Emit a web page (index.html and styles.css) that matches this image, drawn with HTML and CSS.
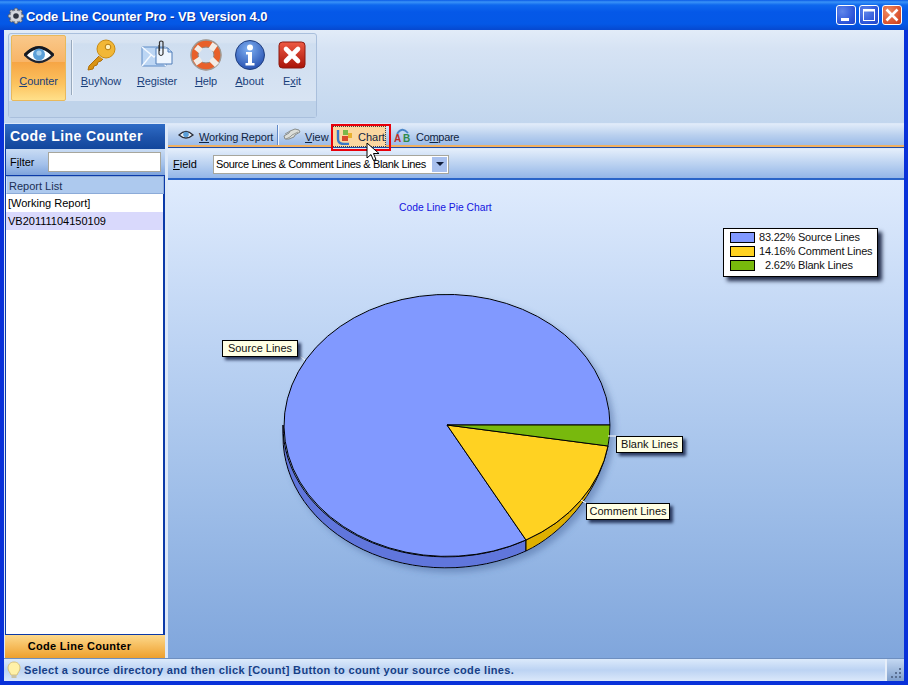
FILE: index.html
```html
<!DOCTYPE html>
<html lang="en">
<head>
<meta charset="utf-8">
<title>Code Line Counter Pro</title>
<link rel="stylesheet" href="styles.css">
</head>
<body>
<div class="window">
  <header class="titlebar">
    <svg class="app-icon" width="18" height="18" viewBox="0 0 18 18">
      <g fill="#c4c8d0" stroke="#4a4f5c" stroke-width=".7"><circle cx="9" cy="9" r="6.5"/><circle cx="9" cy="2.8" r="1.8"/><circle cx="9" cy="15.2" r="1.8"/><circle cx="2.8" cy="9" r="1.8"/><circle cx="15.2" cy="9" r="1.8"/><circle cx="4.6" cy="4.6" r="1.8"/><circle cx="13.4" cy="4.6" r="1.8"/><circle cx="4.6" cy="13.4" r="1.8"/><circle cx="13.4" cy="13.4" r="1.8"/></g>
      <circle cx="9" cy="9" r="5.6" fill="#d4d7de"/><circle cx="9" cy="9" r="2.8" fill="#2f3542"/>
    </svg>
    <span class="title-text">Code Line Counter Pro - VB Version 4.0</span>
    <div class="win-buttons">
      <span class="win-btn"><svg width="20" height="20" viewBox="0 0 20 20"><rect x="5" y="13" width="8" height="3" fill="#fff"/></svg></span>
      <span class="win-btn"><svg width="20" height="20" viewBox="0 0 20 20"><rect x="4.500" y="4.500" width="11" height="11" fill="none" stroke="#fff" stroke-width="1"/><rect x="4.500" y="4" width="11" height="2.500" fill="#fff"/></svg></span>
      <span class="win-btn close"><svg width="20" height="20" viewBox="0 0 20 20"><path d="M4.500 4.500l11 11M15.500 4.500l-11 11" stroke="#fff" stroke-width="2.600"/></svg></span>
    </div>
  </header>

  <div class="client">
    <section class="ribbon">
      <div class="ribbon-group">
        <div class="ribbon-lower"></div>
        <div class="ribbon-items">
          <div class="rb-btn active w54">
            <svg width="30" height="22" viewBox="0 0 30 22"><path d="M1 11Q15-4 29 11Q15 25 1 11Z" fill="#fff" stroke="#1f2430" stroke-width="2.400"/><path d="M1 11Q15-4 29 11" fill="none" stroke="#15181f" stroke-width="3"/><circle cx="15" cy="10.500" r="6" fill="#5b9fd8"/><circle cx="15" cy="9" r="2.600" fill="#a9d2f0"/></svg>
            <span><u>C</u>ounter</span>
          </div>
          <div class="rb-sep"></div>
          <div class="rb-btn w56">
            <svg width="32" height="32" viewBox="0 0 32 32"><path d="M14 17L4 27l-1 4 5-1 1-3 3-1 1-3 3-1 2-2" fill="#d99414" stroke="#b06f08" stroke-width="1"/><circle cx="21" cy="10" r="9" fill="#f2b736" stroke="#c98a10"/><circle cx="23" cy="8" r="2.800" fill="#fff2bf" stroke="#b67b0c"/></svg>
            <span><u>B</u>uyNow</span>
          </div>
          <div class="rb-btn w56">
            <svg width="32" height="32" viewBox="0 0 32 32"><path d="M1 8h24v19H1z" fill="#bcd6f4" stroke="#5f8cc6"/><path d="M1 8l12 10L25 8M1 27l9-11M25 27l-9-11" fill="none" stroke="#f4f9ff" stroke-width="1.400"/><path d="M15 9h12l4 4v12H15z" fill="#eef6ff" stroke="#4f7db8"/><path d="M27 9v4h4" fill="#bcd6f4" stroke="#4f7db8"/><path d="M18 6v9q2 3 4 0V3q-2-2-3.500 0v9" fill="none" stroke="#333" stroke-width="1.200"/></svg>
            <span><u>R</u>egister</span>
          </div>
          <div class="rb-btn w42">
            <svg width="32" height="32" viewBox="0 0 32 32"><circle cx="16" cy="16" r="11.500" fill="none" stroke="#e8602a" stroke-width="7.500"/><circle cx="16" cy="16" r="15" fill="none" stroke="#9d9a94" stroke-width="1.400"/><circle cx="16" cy="16" r="8" fill="none" stroke="#8e8a85" stroke-width="1"/><path d="M6 8l5 4M25 5l-4 6M5 24l6-4M27 26l-6-6" stroke="#f1ece6" stroke-width="6"/></svg>
            <span><u>H</u>elp</span>
          </div>
          <div class="rb-btn w46">
            <svg width="32" height="32" viewBox="0 0 32 32"><defs><radialGradient id="ab" cx=".45" cy=".3" r=".8"><stop offset="0" stop-color="#7fb0f2"/><stop offset="1" stop-color="#1c45a8"/></radialGradient></defs><circle cx="16" cy="16" r="14.500" fill="url(#ab)" stroke="#22407f"/><circle cx="16" cy="8.500" r="3" fill="#fff"/><path d="M12 13h6v11h2.500v2.500h-9V24H14v-8.500h-2z" fill="#fff"/></svg>
            <span><u>A</u>bout</span>
          </div>
          <div class="rb-btn w40">
            <svg width="32" height="32" viewBox="0 0 32 32"><defs><linearGradient id="ex" x1="0" y1="0" x2="0" y2="1"><stop offset="0" stop-color="#ee5a44"/><stop offset="1" stop-color="#a81408"/></linearGradient></defs><rect x="3" y="3" width="26" height="26" rx="3.500" fill="url(#ex)" stroke="#8a1a10"/><path d="M10 10l12 12M22 10L10 22" stroke="#fff" stroke-width="4.600" stroke-linecap="round"/></svg>
            <span>E<u>x</u>it</span>
          </div>
        </div>
      </div>
    </section>

    <div class="main">
      <aside class="side">
        <div class="side-head">Code Line Counter</div>
        <div class="filter"><label>F<u>i</u>lter</label><div class="input"></div></div>
        <div class="list-head">Report List</div>
        <ul class="list">
          <li>[Working Report]</li>
          <li class="selected">VB20111104150109</li>
        </ul>
        <div class="side-foot">Code Line Counter</div>
      </aside>

      <div class="content">
        <nav class="tabs">
          <div class="tab t-work">
            <svg width="16" height="12" viewBox="0 0 16 12"><path d="M1 6Q8-1 15 6Q8 12 1 6Z" fill="#eef2f6" stroke="#2a2f3a" stroke-width="1.300"/><circle cx="8" cy="5.500" r="2.800" fill="#5b9fd8"/></svg>
            <span><u>W</u>orking Report</span>
          </div>
          <div class="tab-sep"></div>
          <div class="tab t-view">
            <svg width="18" height="13" viewBox="0 0 18 13"><path d="M1 8l5-3 1-2 5-2 4 1 1 2-5 3-1 2-5 2-4 0z" fill="#dcded9" stroke="#767974" stroke-width=".8"/><path d="M3 11l4-2 2-2 6-3M2 6l5-3" stroke="#8f928e" stroke-width=".9" fill="none"/></svg>
            <span><u>V</u>iew</span>
          </div>
          <div class="tab t-chart">
            <svg width="17" height="17" viewBox="0 0 17 17"><path d="M2 2v9q0 5 6 5h5" fill="none" stroke="#3a78c8" stroke-width="2.400"/><path d="M7 2h5v5H7z" fill="#7bb84a"/><path d="M12 5h4v5h-4z" fill="#e8b030"/><path d="M6 8h6v5H6z" fill="#d9482c"/></svg>
            <span>Chart</span>
          </div>
          <div class="tab t-comp">
            <svg width="17" height="16" viewBox="0 0 17 16"><path d="M3 7Q8-1 14 6" fill="none" stroke="#4a86c8" stroke-width="1.800"/><text x="0" y="15" class="ab-a">A</text><text x="9" y="15" class="ab-b">B</text></svg>
            <span>Co<u>m</u>pare</span>
          </div>
        </nav>
        <div class="field-row">
          <label><u>F</u>ield</label>
          <div class="select"><span>Source Lines &amp; Comment Lines &amp; Blank Lines</span><i class="arrow"></i></div>
        </div>
        <div class="chart">
          <div class="chart-title">Code Line Pie Chart</div>
          <svg class="pie" width="736" height="478" viewBox="168 180 736 478">
            <defs><filter id="sh" x="-10%" y="-10%" width="125%" height="125%"><feDropShadow dx="4" dy="4" stdDeviation="3" flood-color="#3f5f95" flood-opacity=".45"/></filter></defs>
            <g stroke="#000" stroke-width="1" filter="url(#sh)">
              <path d="M283 425V436A163 131 0 0 0 526 551V540A163 131 0 0 1 283 425Z" fill="#6176dc"/>
              <path d="M526 540V551C560 535 598 495 608 446A163 131 0 0 1 526 540Z" fill="#dfb004"/>
              <path d="M447 425L526 540A163 131 0 1 1 610 425Z" fill="#8199ff"/>
              <path d="M447 425L608 446A163 131 0 0 1 526 540Z" fill="#ffd220"/>
              <path d="M447 425H610Q610 436 608 446Z" fill="#78b90c"/>
            </g>
            <path d="M298 355L305 360M608 436H616M581 500L586 503" stroke="#fff" stroke-width="1" fill="none"/>
          </svg>
          <div class="legend">
            <div class="lg-row"><i class="sw s1"></i><span>83.22% Source Lines</span></div>
            <div class="lg-row"><i class="sw s2"></i><span>14.16% Comment Lines</span></div>
            <div class="lg-row"><i class="sw s3"></i><span class="ind">2.62% Blank Lines</span></div>
          </div>
          <div class="pin p-source">Source Lines</div>
          <div class="pin p-blank">Blank Lines</div>
          <div class="pin p-comment">Comment Lines</div>
        </div>
      </div>
    </div>

    <footer class="status">
      <div class="status-main">
        <svg width="14" height="18" viewBox="0 0 14 18"><path d="M7 1C3 1 1 4 1 7c0 3 2 4 3 7h6c1-3 3-4 3-7 0-3-2-6-6-6z" fill="#fff1a8" stroke="#d8c27a"/><rect x="4.500" y="14" width="5" height="3" fill="#c9c3a6"/></svg>
        <span>Select a source directory and then click [Count] Button to count your source code lines.</span>
      </div>
      <div class="grip">
        <svg width="15" height="15" viewBox="0 0 15 15" fill="#5a6f92"><rect x="10" y="2" width="2" height="2"/><rect x="6" y="6" width="2" height="2"/><rect x="10" y="6" width="2" height="2"/><rect x="2" y="10" width="2" height="2"/><rect x="6" y="10" width="2" height="2"/><rect x="10" y="10" width="2" height="2"/></svg>
      </div>
    </footer>
  </div>

  <div class="highlight"></div>
  <svg class="cursor" width="14" height="20" viewBox="0 0 14 20"><path d="M1 1v15l4-3.500 2.500 6 2.500-1-2.500-6H13z" fill="#fff" stroke="#000"/></svg>
</div>
</body>
</html>
```
FILE: styles.css
```css
* { box-sizing: border-box; }
html, body { margin: 0; padding: 0; }
body { width: 908px; height: 685px; overflow: hidden; font: 11px "Liberation Sans", Arial, sans-serif; color: #000; }
ul { margin: 0; padding: 0; list-style: none; }
label { display: block; }

.window { position: relative; width: 908px; height: 685px; display: flex; flex-direction: column; background: #0831d9; }

.titlebar { height: 30px; flex: none; display: flex; align-items: center; padding: 3px 6px 0 7px; background: linear-gradient(#0a5ae6 0, #3a93f7 2px, #0e68ee 5px, #0558e8 12px, #0458e6 24px, #0648cf 30px); }
.app-icon { flex: none; margin: -2px 1px 0 0; }
.title-text { flex: 1; font: bold 13px "Liberation Sans", sans-serif; letter-spacing: -.05px; color: #fff; text-shadow: 1px 1px 0 #0a2f9c; }
.win-buttons { display: flex; gap: 3px; margin-top: -3px; }
.win-btn { width: 20px; height: 20px; border: 1px solid #fff; border-radius: 3px; background: radial-gradient(circle at 30% 30%, #5f86ea, #2a52d8 70%, #2444c4); display: flex; }
.win-btn svg { margin: -1px; }
.win-btn.close { background: radial-gradient(circle at 30% 30%, #ef8c62, #d9502c 70%, #c23c18); }

.client { flex: 1; margin: 0 4px 4px; display: flex; flex-direction: column; min-height: 0; background: #dfe9f6; }

.ribbon { height: 93px; flex: none; padding: 3px 0 0 4px; background: linear-gradient(#e2ecf8 0, #d6e3f4 20%, #c9dbf0 70%, #c2d6ee 100%); }
.ribbon-group { position: relative; width: 309px; height: 85px; border: 1px solid #a9bfdc; border-radius: 3px; background: linear-gradient(#dbe6f4 0, #d7e3f2 10%, #cfdef0 12%, #d8e4f3 80%); }
.ribbon-lower { position: absolute; left: 0; right: 0; bottom: 0; height: 16px; background: #bfd3ea; }
.ribbon-items { position: relative; display: flex; align-items: flex-start; padding: 1px 0 0 2px; }
.rb-btn { height: 66px; display: flex; flex-direction: column; align-items: center; padding-top: 4px; color: #1a3f7a; gap: 4px; }
.rb-btn svg { flex: none; height: 32px; }
.rb-btn span { display: block; line-height: 13px; white-space: nowrap; letter-spacing: -.1px; }
.rb-btn.active { border: 1px solid #e8b95c; padding-top: 3px; background: linear-gradient(#f9c88a 0, #f8b568 40%, #f6a545 41%, #fcc35f 75%, #ffe08a 100%); color: #1a3f7a; border-radius: 2px; }
.w54 { width: 55px; }
.w56 { width: 56px; }
.w42 { width: 42px; }
.w46 { width: 45px; }
.w40 { width: 40px; }
.rb-sep { width: 1px; height: 55px; margin: 5px 1px 0 5px; background: #98a9bd; box-shadow: 1px 0 0 #eef4fa; }

.main { flex: 1; display: flex; min-height: 0; padding-top: 1px; background: #dce8f8; }

.side { width: 160px; margin-left: 1px; flex: none; display: flex; flex-direction: column; background: #0b3aa8; }
.side-head { height: 25px; flex: none; padding-left: 5px; font: bold 14px/24px "Liberation Sans", sans-serif; letter-spacing: .45px; color: #fff; background: linear-gradient(#2f6cc6, #1e54ab 55%, #12469c); }
.filter { height: 26px; flex: none; display: flex; align-items: center; padding: 0 4px 0 4px; background: linear-gradient(#c9dcf4, #a2c0ea 60%, #7ea3dc); border-left: 1px solid #0b3aa8; }
.filter label { width: 38px; }
.input { flex: 1; height: 20px; background: #fff; border: 1px solid #a7a69c; }
.list-head { height: 18px; flex: none; margin: 1px 1px 0; padding-left: 2px; line-height: 18px; background: #adc9ee; border: 1px solid #8cabd8; border-left-color: #cfe0f6; color: #1b2f55; }
.list { flex: 1; margin: 0 2px 0 1px; background: #fff; min-height: 0; }
.list li { height: 18px; line-height: 18px; padding-left: 2px; white-space: nowrap; }
.list li.selected { background: #d9d9fc; }
.side-foot { height: 23px; flex: none; margin-top: 1px; padding-right: 11px; text-align: center; font: bold 11px/23px "Liberation Sans", sans-serif; letter-spacing: .3px; background: linear-gradient(#fcd98c, #f6bc5c 50%, #eda02e); }

.content { flex: 1; min-width: 0; margin-left: 3px; display: flex; flex-direction: column; }
.tabs { height: 23px; flex: none; display: flex; align-items: center; background: linear-gradient(#e0ebf9, #b8cfee 55%, #9cbce8); border-bottom: 2px solid #f0b060; box-shadow: 0 1px 0 #1e4ca8; padding-left: 10px; position: relative; }
.tab { display: flex; align-items: center; height: 21px; white-space: nowrap; color: #10243f; }
.tab span { padding-top: 4px; }
.t-work { gap: 5px; width: 98px; }
.t-work span { letter-spacing: -.15px; }
.tab-sep { width: 1px; height: 20px; margin: 0 5px 0 1px; background: #5f88c8; box-shadow: 1px 0 0 #f2f7fd; }
.t-view { gap: 4px; width: 47px; }
.t-chart { gap: 5px; width: 54px; margin-left: 2px; padding-left: 4px; margin-top: 3px; background: #fbd7a0; outline: 1px dotted #444; outline-offset: -1px; }
.t-chart span { padding-top: 1px; }
.t-comp { gap: 5px; margin-left: 8px; }
.t-comp span { letter-spacing: -.3px; }
.ab-a, .ab-b { font: bold 10px "Liberation Sans", sans-serif; }
.ab-a { fill: #b8302a; }
.ab-b { fill: #2f8a4a; }

.field-row { height: 31px; flex: none; margin-top: 2px; display: flex; align-items: center; padding: 1px 0 0 5px; background: linear-gradient(#e4eefb, #b8d0f0 55%, #94b6e8); border-bottom: 2px solid #2a64c8; }
.field-row label { width: 40px; }
.select { width: 236px; height: 19px; display: flex; align-items: center; justify-content: space-between; background: #fff; border: 1px solid #a7a69c; padding: 0 1px 0 2px; white-space: nowrap; letter-spacing: -.36px; }
.arrow { display: flex; align-items: center; justify-content: center; width: 15px; height: 15px; flex: none; background: #a8c0ee; }
.arrow::after { content: ""; border: 4px solid transparent; border-top: 4px solid #0f1c3a; border-bottom: 0; }

.chart { flex: 1; position: relative; min-height: 0; background: linear-gradient(#dfebfd 0, #bcd3f3 35%, #a0bfe9 65%, #80a6dc 100%); }
.chart-title { position: absolute; left: 231px; top: 22px; color: #1414e0; font-size: 10.300px; white-space: nowrap; }
.pie { position: absolute; left: 0; top: 0; display: block; }
.legend { position: absolute; left: 555px; top: 48px; width: 155px; height: 49px; padding: 1px 0 0 6px; background: #fff; border: 1px solid #000; box-shadow: 4px 4px 4px #232d4a; }
.lg-row { display: flex; align-items: center; height: 14px; gap: 4px; white-space: nowrap; font-size: 11px; color: #111; letter-spacing: -.2px; }
.sw { width: 25px; height: 11px; border: 1px solid #000; flex: none; }
.s1 { background: #8199ff; }
.s2 { background: #ffd220; }
.s3 { background: #78b90c; }
.ind { padding-left: 6px; }
.pin { position: absolute; height: 17px; line-height: 15px; text-align: center; background: #ffffe4; border: 1px solid #000; box-shadow: 3px 3px 3px #2a3a60; white-space: nowrap; color: #111; }
.p-source { left: 54px; top: 160px; width: 76px; }
.p-blank { left: 448px; top: 256px; width: 67px; }
.p-comment { left: 418px; top: 323px; width: 84px; }

.status { height: 23px; flex: none; display: flex; border-top: 1px solid #6e8fc0; background: #bcd2ef; }
.status-main { flex: 1; display: flex; align-items: center; gap: 3px; padding-left: 3px; font-weight: bold; letter-spacing: .34px; color: #173f86; background: linear-gradient(#dceafb, #bcd3f3 50%, #dbe8fa); border-right: 2px solid #e6eef9; }
.status-main svg { flex: none; }
.grip { width: 17px; display: flex; align-items: flex-end; justify-content: flex-end; background: linear-gradient(#c4d8f2, #7f9fcc); }

.highlight { position: absolute; left: 331px; top: 124px; width: 60px; height: 27px; border: 2px solid #e8000a; pointer-events: none; }
.cursor { position: absolute; left: 366px; top: 142px; }
```
